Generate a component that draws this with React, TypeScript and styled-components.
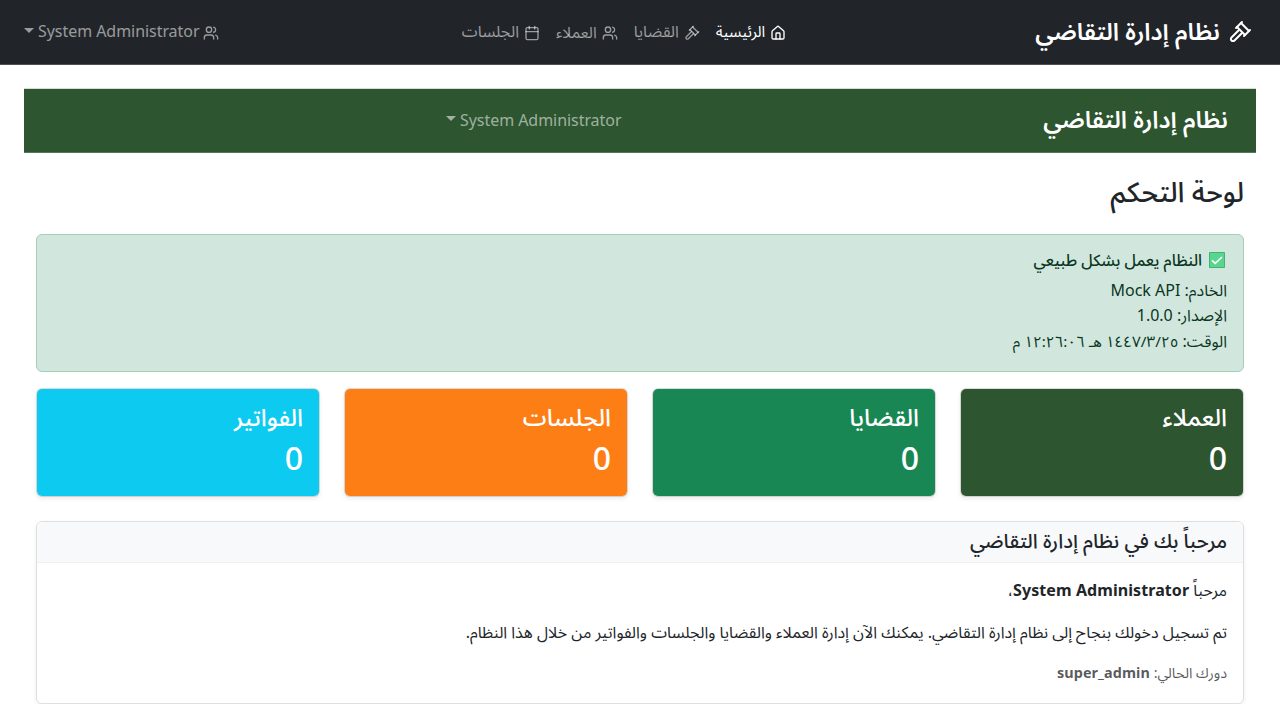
import React from "react";
import styled, { createGlobalStyle } from "styled-components";
import { Calendar, House, Users } from "lucide-react";

const GlobalStyle = createGlobalStyle`
  *, *::before, *::after { box-sizing: border-box; }
  body {
    margin: 0;
    background: #fff;
    color: #212529;
    font-family: "Noto Sans", "Noto Sans Arabic", sans-serif;
    font-size: 16px;
    line-height: 1.6;
    overflow: hidden;
  }
  h1, h2, h4, h5, p { margin: 0; font-weight: 500; line-height: 1.2; }
`;

const Page = styled.div`
  direction: rtl;
  text-align: right;
`;

const TopBar = styled.header`
  display: flex;
  align-items: center;
  height: 65px;
  padding: 0 28px 0 16px;
  background: #212529;
  border-bottom: 1px solid #4d5154;
`;

const Brand = styled.a`
  display: flex;
  align-items: center;
  gap: 8px;
  margin-bottom: 2px;
  color: #fff;
  font-size: 24px;
  font-weight: 600;
  line-height: 38.4px;
  white-space: nowrap;

  svg { margin-top: 2px; }
`;

const Menu = styled.nav`
  display: flex;
  margin: 0 241px 0 auto;
`;

const Link = styled.a<{ $active?: boolean; $gap?: number; $size?: number }>`
  display: flex;
  align-items: center;
  gap: ${(p) => p.$gap ?? 4}px;
  padding: 8px;
  white-space: nowrap;
  font-size: ${(p) => p.$size ?? 16}px;
  letter-spacing: -0.05px;
  color: ${(p) => (p.$active ? "#fff" : "rgba(255, 255, 255, 0.55)")};

  svg { margin-top: 2px; }
`;

const Caret = styled.span`
  width: 0;
  height: 0;
  margin-bottom: 4px;
  border-top: 5px solid;
  border-left: 5px solid transparent;
  border-right: 5px solid transparent;
`;

const Main = styled.main`
  padding: 23px 24px 0;
`;

const GreenBar = styled.div`
  display: flex;
  align-items: center;
  justify-content: space-between;
  height: 65px;
  padding: 0 28px 0 414px;
  background: #2d5530;
  border-top: 1px solid #d5ddd6;
  border-bottom: 1px solid #577759;
`;

const Content = styled.div`
  padding: 22px 12px 0;
`;

const Title = styled.h2`
  font-size: 28px;
`;

const Alert = styled.section`
  height: 138px;
  margin-top: 25px;
  padding: 16px;
  border: 1px solid #a3cfbb;
  border-radius: 6px;
  background: #d1e7dd;
  color: #0a3622;
`;

const AlertTitle = styled.h5`
  display: flex;
  align-items: center;
  gap: 7px;
  margin-bottom: 8px;
  padding-right: 2px;
  font-size: 16px;
`;

const Stamp = styled.span`
  font-size: 15.3px;
`;

const Stats = styled.div`
  display: grid;
  grid-template-columns: repeat(4, 1fr);
  gap: 24px;
  margin-top: 16px;
`;

const StatCard = styled.div<{ $color: string }>`
  height: 109px;
  padding: 14px 16px;
  border: 1px solid rgba(0, 0, 0, 0.125);
  border-radius: 6px;
  background: ${(p) => p.$color};
  background-clip: padding-box;
  box-shadow: 0 2px 4px rgba(0, 0, 0, 0.075);
  color: #fff;
`;

const StatLabel = styled.h4`
  font-size: 24px;
  margin-bottom: 8px;
`;

const StatValue = styled.h2`
  font-size: 32px;
`;

const Welcome = styled.section`
  height: 183px;
  margin-top: 24px;
  border: 1px solid rgba(0, 0, 0, 0.125);
  border-radius: 6px;
  box-shadow: 0 2px 4px rgba(0, 0, 0, 0.075);
  overflow: hidden;
`;

const WelcomeHeader = styled.div`
  padding: 7px 16px 9px;
  background: #f8f9fa;
  border-bottom: 1px solid #f0f1f2;
`;

const WelcomeTitle = styled.h5`
  font-size: 20px;
`;

const WelcomeBody = styled.div`
  padding: 15px 16px;
`;

const Text = styled.p<{ $muted?: boolean }>`
  margin-bottom: 16.5px;
  font-weight: 400;
  line-height: ${(p) => (p.$muted ? "22px" : "1.6")};
  font-size: ${(p) => (p.$muted ? "14.4px" : "16px")};
  color: ${(p) => (p.$muted ? "rgba(33, 37, 41, 0.75)" : "inherit")};

  strong { letter-spacing: 0.08px; }
`;

function Gavel({ size }: { size: number }) {
  return (
    <svg
      width={size}
      height={size}
      viewBox="0 0 24 24"
      fill="none"
      stroke="currentColor"
      strokeWidth="2"
      strokeLinecap="round"
      strokeLinejoin="round"
    >
      <path d="m14 13-7.5 7.5c-.83.83-2.17.83-3 0a2.12 2.12 0 0 1 0-3L11 10" />
      <path d="m16 16 6-6" />
      <path d="m8 8 6-6" />
      <path d="m9 7 8 8" />
      <path d="m21 11-8-8" />
    </svg>
  );
}

function CheckBadge() {
  return (
    <svg width="16" height="16" viewBox="0 0 16 16" fill="none">
      <rect width="16" height="16" rx="0.8" fill="#43b178" />
      <rect x="1" y="1" width="14" height="14" fill="#58d68d" />
      <path d="M3 8.3 6.3 11.3 13 5" stroke="#fff" strokeWidth="1.7" />
    </svg>
  );
}

const links = [
  { label: "الرئيسية", Icon: House, active: true, size: 15.4 },
  { label: "القضايا", Icon: Gavel },
  { label: "العملاء", Icon: Users, size: 15.6 },
  { label: "الجلسات", Icon: Calendar },
];

const stats = [
  { label: "العملاء", color: "#2d5530" },
  { label: "القضايا", color: "#198754" },
  { label: "الجلسات", color: "#fd7e14" },
  { label: "الفواتير", color: "#0dcaf0" },
];

export default function App() {
  return (
    <Page lang="ar">
      <GlobalStyle />
      <TopBar>
        <Brand>
          <Gavel size={24} />
          نظام إدارة التقاضي
        </Brand>
        <Menu>
          {links.map(({ label, Icon, active, size }) => (
            <Link key={label} $active={active} $gap={5} $size={size}>
              <Icon size={16} />
              {label}
            </Link>
          ))}
        </Menu>
        <Link>
          <Users size={16} />
          System Administrator
          <Caret />
        </Link>
      </TopBar>
      <Main>
        <GreenBar>
          <Brand>نظام إدارة التقاضي</Brand>
          <Link>
            System Administrator
            <Caret />
          </Link>
        </GreenBar>
        <Content>
          <Title>لوحة التحكم</Title>
          <Alert>
            <AlertTitle>
              <CheckBadge />
              النظام يعمل بشكل طبيعي
            </AlertTitle>
            <div>الخادم: Mock API</div>
            <div>الإصدار: 1.0.0</div>
            <div>
              الوقت: <Stamp>٢٥‏/٣‏/١٤٤٧ هـ ١٢:٢٦:٠٦ م</Stamp>
            </div>
          </Alert>
          <Stats>
            {stats.map((s) => (
              <StatCard key={s.label} $color={s.color}>
                <StatLabel>{s.label}</StatLabel>
                <StatValue>0</StatValue>
              </StatCard>
            ))}
          </Stats>
          <Welcome>
            <WelcomeHeader>
              <WelcomeTitle>مرحباً بك في نظام إدارة التقاضي</WelcomeTitle>
            </WelcomeHeader>
            <WelcomeBody>
              <Text>
                مرحباً <strong>System Administrator</strong>،
              </Text>
              <Text>
                تم تسجيل دخولك بنجاح إلى نظام إدارة التقاضي. يمكنك الآن إدارة العملاء والقضايا والجلسات والفواتير من خلال هذا النظام.
              </Text>
              <Text $muted>
                دورك الحالي: <strong>super_admin</strong>
              </Text>
            </WelcomeBody>
          </Welcome>
        </Content>
      </Main>
    </Page>
  );
}
